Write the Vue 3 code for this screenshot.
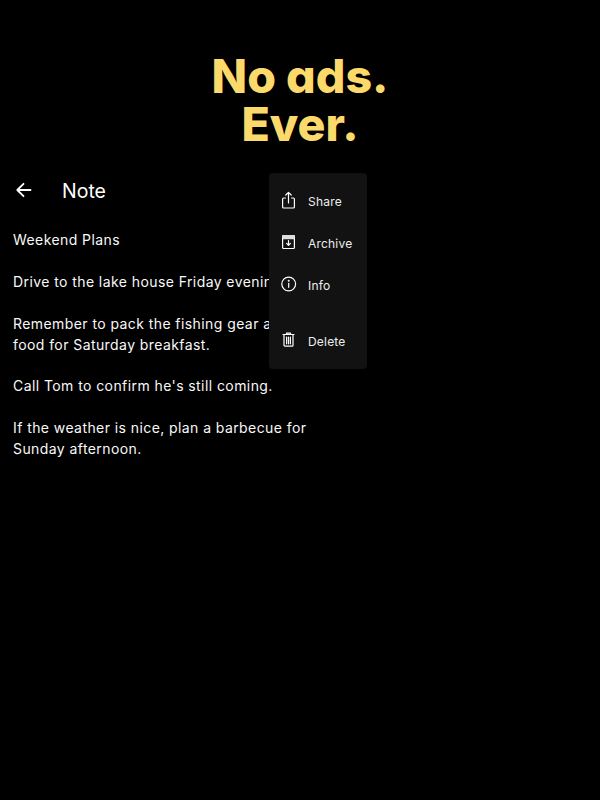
<script setup>
const items = [
  { label: 'Share', icon: 'share' },
  { label: 'Archive', icon: 'archive' },
  { label: 'Info', icon: 'info' },
  { label: 'Delete', icon: 'delete' },
]
const paragraphs = [
  'Weekend Plans',
  'Drive to the lake house Friday evening.',
  'Remember to pack the fishing gear and\nfood for Saturday breakfast.',
  "Call Tom to confirm he's still coming.",
  'If the weather is nice, plan a barbecue for\nSunday afternoon.',
]
</script>

<template>
  <div class="page">
    <h1 class="headline">No ads.<br />Ever.</h1>
    <div class="phone">
      <header class="bar">
        <svg class="back" width="24" height="24" viewBox="0 0 24 24" fill="none" stroke="#fff" stroke-width="1.8" stroke-linecap="round" stroke-linejoin="round">
          <path d="M18.5 12H5.5M11.5 5.8 5.3 12l6.2 6.2" />
        </svg>
        <span class="title">Note</span>
      </header>
      <main class="note">
        <p v-for="p in paragraphs" :key="p">{{ p }}</p>
      </main>
      <div class="menu">
        <div v-for="item in items" :key="item.label" class="item" :class="{ last: item.icon === 'delete' }">
          <svg width="20" height="20" viewBox="0 1 20 20" fill="none" stroke="#fff" stroke-width="1.2" stroke-linecap="round" stroke-linejoin="round">
            <template v-if="item.icon === 'share'">
              <path d="M6.5 8H4.6a1 1 0 0 0-1 1v8a1 1 0 0 0 1 1h9.8a1 1 0 0 0 1-1V9a1 1 0 0 0-1-1h-1.9" />
              <path d="M9.5 13V2.6M6.8 5 9.5 2.3 12.2 5" />
            </template>
            <template v-else-if="item.icon === 'archive'">
              <path fill="#ddd" stroke="#ddd" d="M3.6 3.6h11.8v3h-11.8z" />
              <path d="M3.6 6.5v9a1 1 0 0 0 1 1h9.8a1 1 0 0 0 1-1v-9" />
              <path d="M9.5 8.6v4.6M7.6 11.4l1.9 1.9 1.9-1.9" />
            </template>
            <template v-else-if="item.icon === 'info'">
              <circle cx="9.7" cy="10" r="6.9" />
              <path d="M9.7 9.3v4" />
              <circle cx="9.7" cy="6.7" r=".4" fill="#fff" />
            </template>
            <template v-else>
              <path d="M4 4.5h11M7.5 4.3V3.2h4v1.1M5 4.5v10.7a1 1 0 0 0 1 1h7a1 1 0 0 0 1-1V4.5" />
              <path d="M7.6 7v6.8M9.5 7v6.8M11.4 7v6.8" />
            </template>
          </svg>
          <span>{{ item.label }}</span>
        </div>
      </div>
    </div>
  </div>
</template>

<style scoped>
.page {
  width: 600px;
  height: 800px;
  background: #000;
  font-family: Inter, "Liberation Sans", sans-serif;
  color: #fff;
  overflow: hidden;
}
.headline {
  margin: 0;
  padding-top: 52px;
  text-align: center;
  font-family: Inter, sans-serif;
  font-weight: 800;
  font-size: 46.5px;
  line-height: 48px;
  font-feature-settings: "cv11";
  color: #fbd96b;
}
.phone {
  position: relative;
  margin-top: 20px;
}
.bar {
  display: flex;
  align-items: center;
  height: 44px;
  padding-left: 12px;
}
.title {
  margin-left: 26px;
  padding-top: 1px;
  font-size: 19.5px;
  line-height: 24px;
}
.note {
  padding: 18px 13px 0;
  font-size: 14px;
  line-height: 20.9px;
  letter-spacing: 0.42px;
  color: #f8f8f8;
}
.note p {
  margin: 0 0 20.9px;
  white-space: pre-line;
}
.menu {
  position: absolute;
  left: 269px;
  top: 5px;
  width: 98px;
  height: 196px;
  box-sizing: border-box;
  padding-top: 7px;
  background: #121212;
  border-radius: 4px;
  display: flex;
  flex-direction: column;
}
.item {
  display: flex;
  align-items: center;
  gap: 9px;
  height: 42px;
  padding-left: 10px;
  font-size: 12px;
  letter-spacing: 0.2px;
  color: #eee;
}
.item.last {
  margin-top: 14px;
}
</style>
